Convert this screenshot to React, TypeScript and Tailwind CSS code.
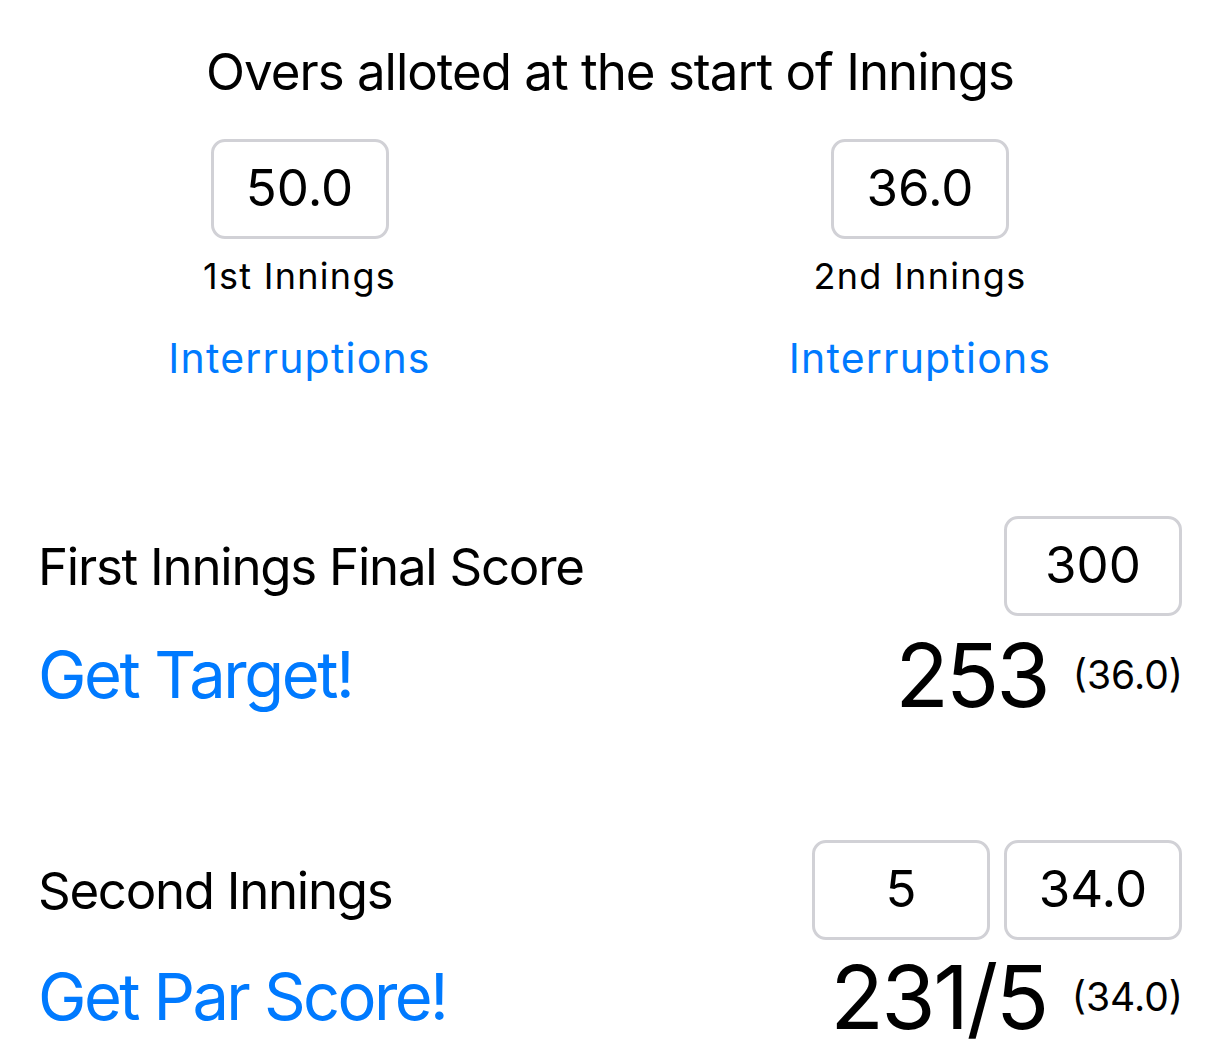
import React from 'react';

function Field({ value }: { value: string }) {
  return (
    <div className="flex h-[100px] w-[178px] items-center justify-center rounded-[14px] border-[3px] border-[#d1d1d6] bg-white pb-[4px] text-[51px] leading-none text-black">
      {value}
    </div>
  );
}

function InningsColumn({ overs, label }: { overs: string; label: string }) {
  return (
    <div className="flex w-[600px] flex-col items-center">
      <Field value={overs} />
      <div className="mt-[15px] text-[36px] leading-[44px] tracking-[1.3px] text-black">{label}</div>
      <button className="mt-[35px] text-[41px] leading-[50px] tracking-[1.2px] text-[#007aff]">Interruptions</button>
    </div>
  );
}

export default function App() {
  return (
    <div className="h-[1056px] w-[1220px] overflow-hidden bg-white font-['Inter','Noto_Sans',sans-serif] text-black">
      {/* Overs */}
      <h1 className="pt-[41px] text-center text-[51px] leading-[61px] font-normal tracking-[-1px]">
        Overs alloted at the start of Innings
      </h1>
      <div className="mt-[37px] flex">
        <InningsColumn overs="50.0" label="1st Innings" />
        <div className="ml-[21px]">
          <InningsColumn overs="36.0" label="2nd Innings" />
        </div>
      </div>

      {/* First innings */}
      <div className="mt-[133px] flex items-center justify-between px-[38px]">
        <div className="text-[51px] leading-[61px] tracking-[-1.25px]">First Innings Final Score</div>
        <Field value="300" />
      </div>
      <div className="mt-[9px] flex h-[100px] items-center justify-between pl-[38px] pr-[37px]">
        <button className="text-[65px] leading-[80px] tracking-[-2.4px] text-[#007aff]">Get Target!</button>
        <div className="flex items-center gap-[25px]">
          <span className="text-[88px] leading-[100px] tracking-[-3px]">253</span>
          <span className="text-[39px] leading-[48px]">(36.0)</span>
        </div>
      </div>

      {/* Second innings */}
      <div className="mt-[115px] flex items-center justify-between px-[38px]">
        <div className="text-[51px] leading-[61px] tracking-[-1.3px]">Second Innings</div>
        <div className="flex gap-[14px]">
          <Field value="5" />
          <Field value="34.0" />
        </div>
      </div>
      <div className="mt-[7px] flex h-[100px] items-center justify-between pl-[38px] pr-[37px]">
        <button className="text-[65px] leading-[80px] tracking-[-2.6px] text-[#007aff]">Get Par Score!</button>
        <div className="flex items-center gap-[25px]">
          <span className="text-[88px] leading-[100px] tracking-[-2.5px]">231/5</span>
          <span className="text-[39px] leading-[48px]">(34.0)</span>
        </div>
      </div>
    </div>
  );
}
